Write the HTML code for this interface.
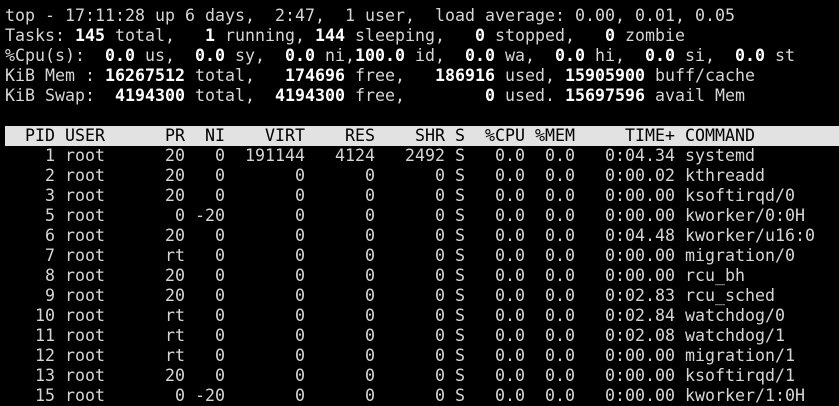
<!DOCTYPE html>
<html><head><style>
html,body{margin:0;padding:0;background:#000;width:839px;height:406px;overflow:hidden}
pre{margin:0;position:absolute;left:5px;top:6px;font-family:"DejaVu Sans Mono","Liberation Mono",monospace;font-size:16.61px;line-height:20px;color:#d6d6d6;white-space:pre}
b{color:#fff;font-weight:bold}
.h{display:inline-block;background:#e2e2e2;color:#000;width:834px}
</style></head><body>
<pre>top - 17:11:28 up 6 days,  2:47,  1 user,  load average: 0.00, 0.01, 0.05
Tasks: <b>145</b> total,   <b>1</b> running, <b>144</b> sleeping,   <b>0</b> stopped,   <b>0</b> zombie
%Cpu(s):  <b>0.0</b> us,  <b>0.0</b> sy,  <b>0.0</b> ni,<b>100.0</b> id,  <b>0.0</b> wa,  <b>0.0</b> hi,  <b>0.0</b> si,  <b>0.0</b> st
KiB Mem : <b>16267512</b> total,   <b>174696</b> free,   <b>186916</b> used, <b>15905900</b> buff/cache
KiB Swap:  <b>4194300</b> total,  <b>4194300</b> free,        <b>0</b> used. <b>15697596</b> avail Mem

<span class="h">  PID USER      PR  NI    VIRT    RES    SHR S  %CPU %MEM     TIME+ COMMAND</span>
    1 root      20   0  191144   4124   2492 S   0.0  0.0   0:04.34 systemd
    2 root      20   0       0      0      0 S   0.0  0.0   0:00.02 kthreadd
    3 root      20   0       0      0      0 S   0.0  0.0   0:00.00 ksoftirqd/0
    5 root       0 -20       0      0      0 S   0.0  0.0   0:00.00 kworker/0:0H
    6 root      20   0       0      0      0 S   0.0  0.0   0:04.48 kworker/u16:0
    7 root      rt   0       0      0      0 S   0.0  0.0   0:00.00 migration/0
    8 root      20   0       0      0      0 S   0.0  0.0   0:00.00 rcu_bh
    9 root      20   0       0      0      0 S   0.0  0.0   0:02.83 rcu_sched
   10 root      rt   0       0      0      0 S   0.0  0.0   0:02.84 watchdog/0
   11 root      rt   0       0      0      0 S   0.0  0.0   0:02.08 watchdog/1
   12 root      rt   0       0      0      0 S   0.0  0.0   0:00.00 migration/1
   13 root      20   0       0      0      0 S   0.0  0.0   0:00.00 ksoftirqd/1
   15 root       0 -20       0      0      0 S   0.0  0.0   0:00.00 kworker/1:0H</pre>
</body></html>
